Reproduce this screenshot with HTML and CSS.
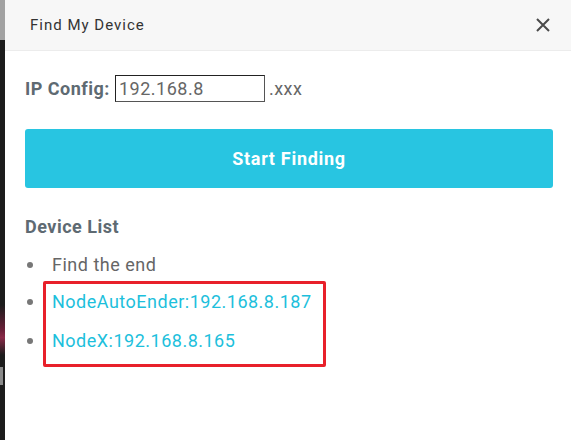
FILE: index.html
```html
<!DOCTYPE html>
<html>
<head>
<meta charset="utf-8">
<link rel="stylesheet" href="styles.css">
</head>
<body>
<div class="page">
  <div class="backdrop">
    <div class="backdrop-top"></div>
    <div class="backdrop-glow"></div>
    <div class="backdrop-i"></div>
  </div>
  <div class="modal">
    <div class="modal-header">
      <span class="modal-title">Find My Device</span>
      <svg class="close" width="16" height="16" viewBox="0 0 16 16"><path d="M2 2L14 14M14 2L2 14" stroke="#4a4a4a" stroke-width="2" fill="none"/></svg>
    </div>
    <div class="modal-body">
      <div class="ip-row">
        <span class="ip-label">IP Config:</span>
        <input class="ip-input" type="text" value="192.168.8">
        <span class="ip-suffix">.xxx</span>
      </div>
      <button class="start-btn">Start Finding</button>
      <div class="list-title">Device List</div>
      <ul class="device-list">
        <li class="plain">Find the end</li>
      </ul>
      <div class="highlight">
        <ul class="device-list found">
          <li>NodeAutoEnder:192.168.8.187</li>
          <li>NodeX:192.168.8.165</li>
        </ul>
      </div>
    </div>
  </div>
</div>
</body>
</html>
```
FILE: styles.css
```css
html, body {
  margin: 0;
  padding: 0;
  height: 100%;
  background: #fff;
}
.page {
  display: flex;
  height: 440px;
  font-family: Roboto, "Liberation Sans", sans-serif;
  letter-spacing: 0.5px;
}
.backdrop {
  width: 5px;
  flex: none;
  background: #1c1c1c;
  display: flex;
  flex-direction: column;
}
.backdrop-top {
  height: 40px;
  background: #a2a2a2;
}
.backdrop-glow {
  margin-top: 265px;
  height: 50px;
  background: linear-gradient(#1c1c1c, #6a2038 50%, #8a2a48 65%, #1c1c1c);
}
.backdrop-i {
  margin-top: 12px;
  height: 18px;
  width: 3px;
  background: #8a8a8a;
}
.modal {
  flex: 1;
  display: flex;
  flex-direction: column;
}
.modal-header {
  height: 50px;
  background: #f7f7f7;
  border-bottom: 1px solid #ececec;
  display: flex;
  align-items: center;
  justify-content: space-between;
  padding: 0 20px 0 25px;
}
.modal-title {
  font-size: 15px;
  letter-spacing: 1px;
  color: #333;
}
.close {
  display: block;
}
.modal-body {
  padding: 24px 18px 0 20px;
}
.ip-row {
  display: flex;
  align-items: center;
  font-size: 18px;
}
.ip-label {
  font-weight: bold;
  color: #5e6a72;
  margin-right: 5px;
}
.ip-input {
  width: 150px;
  height: 27px;
  box-sizing: border-box;
  border: 1px solid #555;
  border-top-color: #222;
  border-left-color: #222;
  padding: 0 3px;
  font-family: inherit;
  letter-spacing: 0.5px;
  font-size: 18px;
  color: #666;
  margin: 0;
}
.ip-suffix {
  color: #666;
  margin-left: 4px;
}
.start-btn {
  display: block;
  width: 100%;
  height: 59px;
  margin-top: 27px;
  border: none;
  border-radius: 3px;
  background: #28c5e1;
  color: #fff;
  font-family: inherit;
  letter-spacing: 0.7px;
  font-weight: bold;
  font-size: 18px;
}
.list-title {
  margin-top: 28px;
  font-size: 18px;
  font-weight: bold;
  color: #5e6a72;
}
.device-list {
  margin: 0;
  padding: 0;
  list-style: none;
  font-size: 18px;
}
.device-list li {
  position: relative;
  padding-left: 27px;
  height: 39px;
  line-height: 39px;
  color: #666;
}
.device-list li::before {
  content: "";
  position: absolute;
  left: 2px;
  top: 17px;
  width: 6px;
  height: 6px;
  border-radius: 50%;
  background: #777;
}
.device-list .plain {
  margin-top: 12px;
  height: 33px;
  line-height: 31px;
}
.device-list .plain::before {
  top: 13px;
}
.highlight {
  position: relative;
}
.highlight::after {
  content: "";
  position: absolute;
  left: 18px;
  top: -1px;
  width: 283px;
  height: 86px;
  box-sizing: border-box;
  border: 3px solid #e8202a;
  border-radius: 2px;
}
.found li {
  color: #1dbfdc;
}
```
